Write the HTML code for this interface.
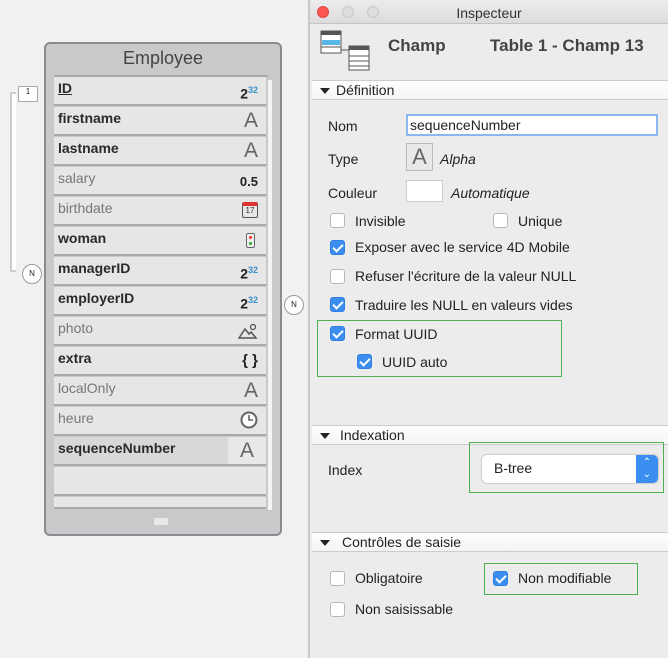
<!DOCTYPE html>
<html><head><meta charset="utf-8"><style>
*{margin:0;padding:0;box-sizing:border-box}
body{width:668px;height:658px;overflow:hidden;background:#f1f1f1;font-family:"Liberation Sans",sans-serif;position:relative;font-size:14px;color:#222}
.a{position:absolute}
.row{position:absolute;left:54px;width:212px;height:29px;background:#e6e6e6;border-bottom:2px solid #a9a9a9;font-size:14px;padding:3px 0 0 4px}
.b{font-weight:bold;color:#2a2a2a}
.l{color:#777}
.ic{position:absolute;right:8px;top:2px;font-size:21px;color:#666;font-weight:normal}
.sec{position:absolute;left:312px;width:356px;height:20px;background:linear-gradient(#fff,#f4f4f4);border-top:1px solid #ccc;border-bottom:1px solid #ccc;font-size:14px;padding:1px 0 0 30px}
.sec:before{content:"";position:absolute;left:8px;top:7px;border-left:5px solid transparent;border-right:5px solid transparent;border-top:6px solid #222}
.cb{position:absolute;width:15px;height:15px;border:1px solid #b8b8b8;border-radius:3px;background:#fff}
.ck{background:#3b8ef0;border-color:#2f7fe0}
.ck:after{content:"";position:absolute;left:4px;top:1px;width:4px;height:8px;border:solid #fff;border-width:0 2px 2px 0;transform:rotate(45deg)}
.t{position:absolute;font-size:14px;color:#222}
.g{position:absolute;border:1px solid #4caf50}
.two{font-size:14px!important;color:#222!important;top:8px!important;font-weight:bold!important}
.two sup{color:#3a8fc7;font-size:9px}
</style></head><body>
<div class="a" style="left:44px;top:42px;width:238px;height:494px;background:#c9c9cc;border:2px solid #8b8b8f;border-radius:6px"></div>
<div class="a" style="left:44px;top:48px;width:238px;text-align:center;font-size:18px;color:#444">Employee</div>
<div class="a" style="left:54px;top:75px;width:214px;height:2px;background:#a9a9a9"></div>
<div class="a" style="left:268px;top:80px;width:4px;height:430px;background:#f4f4f4"></div>
<div class="row b" style="top:77px;text-decoration:underline">ID<span class="ic two">2<sup>32</sup></span></div>
<div class="row b" style="top:107px">firstname<span class="ic">A</span></div>
<div class="row b" style="top:137px">lastname<span class="ic">A</span></div>
<div class="row l" style="top:167px">salary<span class="ic" style="font-size:13px;font-weight:bold;color:#222;top:7px">0.5</span></div>
<div class="row l" style="top:197px">birthdate<span class="ic" style="width:16px;height:16px;border:1px solid #555;border-top:4px solid #d33;border-radius:2px;top:5px;font-size:8px;text-align:center;color:#333">17</span></div>
<div class="row b" style="top:227px">woman<span class="ic" style="width:9px;height:15px;border:1px solid #666;border-radius:2px;top:6px;right:11px;background:#eee"><i style="position:absolute;left:2px;top:2px;width:3px;height:3px;border-radius:50%;background:#e33"></i><i style="position:absolute;left:2px;top:8px;width:3px;height:3px;border-radius:50%;background:#2a2"></i></span></div>
<div class="row b" style="top:257px">managerID<span class="ic two">2<sup>32</sup></span></div>
<div class="row b" style="top:287px">employerID<span class="ic two">2<sup>32</sup></span></div>
<div class="row l" style="top:317px">photo<svg class="ic" style="top:6px" width="20" height="16"><path d="M1 15L7 6l4 5 2-2 5 6z" fill="none" stroke="#555" stroke-width="1.5"/><circle cx="15" cy="4" r="2.5" fill="none" stroke="#555" stroke-width="1.3"/></svg></div>
<div class="row b" style="top:347px">extra<span class="ic" style="font-size:15px;color:#222;font-weight:bold;top:5px">{ }</span></div>
<div class="row l" style="top:377px">localOnly<span class="ic">A</span></div>
<div class="row l" style="top:407px">heure<svg class="ic" style="top:4px" width="18" height="18"><circle cx="9" cy="9" r="7.5" fill="#fff" stroke="#666" stroke-width="2"/><path d="M9 4v5h4" fill="none" stroke="#666" stroke-width="1.6"/></svg></div>
<div class="row b" style="top:437px;background:#d8d8d8">sequenceNumber<span class="ic" style="background:#e8e8e8;width:38px;height:27px;right:0;top:0;text-align:center;padding-top:2px">A</span></div>
<div class="row" style="top:467px"></div>
<div class="row" style="top:497px;height:12px"></div>
<div class="a" style="left:154px;top:518px;width:14px;height:7px;background:#e8e8e8"></div>
<div class="a" style="left:10px;top:92px;width:6px;height:180px;border:2px solid #ccc;border-right:none;background:#fff"></div>
<div class="a" style="left:18px;top:86px;width:20px;height:16px;background:#fff;border:1px solid #aaa;font-size:8px;text-align:center">1</div>
<div class="a" style="left:22px;top:264px;width:20px;height:20px;border-radius:50%;background:#fff;border:1px solid #999;font-size:8px;text-align:center;line-height:18px">N</div>
<div class="a" style="left:284px;top:295px;width:20px;height:20px;border-radius:50%;background:#fff;border:1px solid #999;font-size:8px;text-align:center;line-height:18px">N</div>
<div class="a" style="left:308px;top:0;width:360px;height:658px;background:#ececec;border-left:2px solid #c8c8c8"></div>
<div class="a" style="left:310px;top:0;width:358px;height:24px;background:linear-gradient(#ececec,#dcdcdc);border-bottom:1px solid #c4c4c4;text-align:center;font-size:14px;padding-top:5px;color:#333">Inspecteur</div>
<div class="a" style="left:317px;top:6px;width:12px;height:12px;border-radius:50%;background:#fc5753;border:1px solid #df4744"></div>
<div class="a" style="left:342px;top:6px;width:12px;height:12px;border-radius:50%;background:#ddd;border:1px solid #c8c8c8"></div>
<div class="a" style="left:367px;top:6px;width:12px;height:12px;border-radius:50%;background:#ddd;border:1px solid #c8c8c8"></div>
<svg class="a" style="left:320px;top:30px" width="56" height="42"><rect x="1" y="1" width="20" height="22" fill="#fff" stroke="#555"/><rect x="1" y="1" width="20" height="4" fill="#555"/><rect x="2" y="10" width="18" height="5" fill="#57b7e6"/><line x1="1" y1="17" x2="21" y2="17" stroke="#555"/><path d="M21 20h8v8" fill="none" stroke="#555"/><rect x="29" y="16" width="20" height="24" fill="#fff" stroke="#555"/><rect x="29" y="16" width="20" height="4" fill="#555"/><path d="M29 26h20M29 31h20M29 36h20" stroke="#555"/></svg>
<div class="a" style="left:388px;top:36px;font-size:17px;font-weight:bold;color:#444">Champ</div>
<div class="a" style="left:490px;top:36px;font-size:17px;font-weight:bold;color:#444">Table 1 - Champ 13</div>
<div class="sec" style="top:80px;padding-left:24px">Définition</div>
<div class="t" style="left:328px;top:118px">Nom</div>
<div class="a" style="left:406px;top:114px;width:252px;height:22px;background:#fff;border:2px solid #8cb6ee;font-size:14px;padding:1px 2px">sequenceNumber</div>
<div class="t" style="left:328px;top:151px">Type</div>
<div class="a" style="left:406px;top:143px;width:27px;height:28px;border:1px solid #bbb;background:#e8e8e8;font-size:22px;color:#666;text-align:center">A</div>
<div class="t" style="left:440px;top:151px;font-style:italic">Alpha</div>
<div class="t" style="left:328px;top:185px">Couleur</div>
<div class="a" style="left:406px;top:180px;width:37px;height:22px;background:#fff;border:1px solid #ccc"></div>
<div class="t" style="left:451px;top:185px;font-style:italic">Automatique</div>
<div class="cb" style="left:330px;top:213px"></div><div class="t" style="left:355px;top:213px">Invisible</div>
<div class="cb" style="left:493px;top:213px"></div><div class="t" style="left:518px;top:213px">Unique</div>
<div class="cb ck" style="left:330px;top:240px"></div><div class="t" style="left:355px;top:239px">Exposer avec le service 4D Mobile</div>
<div class="cb" style="left:330px;top:269px"></div><div class="t" style="left:355px;top:268px">Refuser l'écriture de la valeur NULL</div>
<div class="cb ck" style="left:330px;top:297px"></div><div class="t" style="left:355px;top:297px">Traduire les NULL en valeurs vides</div>
<div class="g" style="left:317px;top:320px;width:245px;height:57px"></div>
<div class="cb ck" style="left:330px;top:326px"></div><div class="t" style="left:355px;top:326px">Format UUID</div>
<div class="cb ck" style="left:357px;top:354px"></div><div class="t" style="left:382px;top:354px">UUID auto</div>
<div class="sec" style="top:425px;padding-left:28px">Indexation</div>
<div class="g" style="left:469px;top:442px;width:195px;height:51px"></div>
<div class="t" style="left:328px;top:462px">Index</div>
<div class="a" style="left:482px;top:455px;width:176px;height:28px;background:#fff;border-radius:5px;box-shadow:0 0 1px 1px #ccc;font-size:14px;padding:5px 0 0 12px">B-tree</div>
<div class="a" style="left:636px;top:455px;width:22px;height:28px;background:#3b8ef0;border-radius:0 5px 5px 0;color:#fff;font-size:10px;text-align:center;line-height:12px;padding-top:2px">⌃<br>⌄</div>
<div class="sec" style="top:532px;padding-left:30px">Contrôles de saisie</div>
<div class="g" style="left:484px;top:563px;width:154px;height:32px"></div>
<div class="cb" style="left:330px;top:571px"></div><div class="t" style="left:355px;top:570px">Obligatoire</div>
<div class="cb ck" style="left:493px;top:571px"></div><div class="t" style="left:518px;top:570px">Non modifiable</div>
<div class="cb" style="left:330px;top:602px"></div><div class="t" style="left:355px;top:601px">Non saisissable</div>
</body></html>
